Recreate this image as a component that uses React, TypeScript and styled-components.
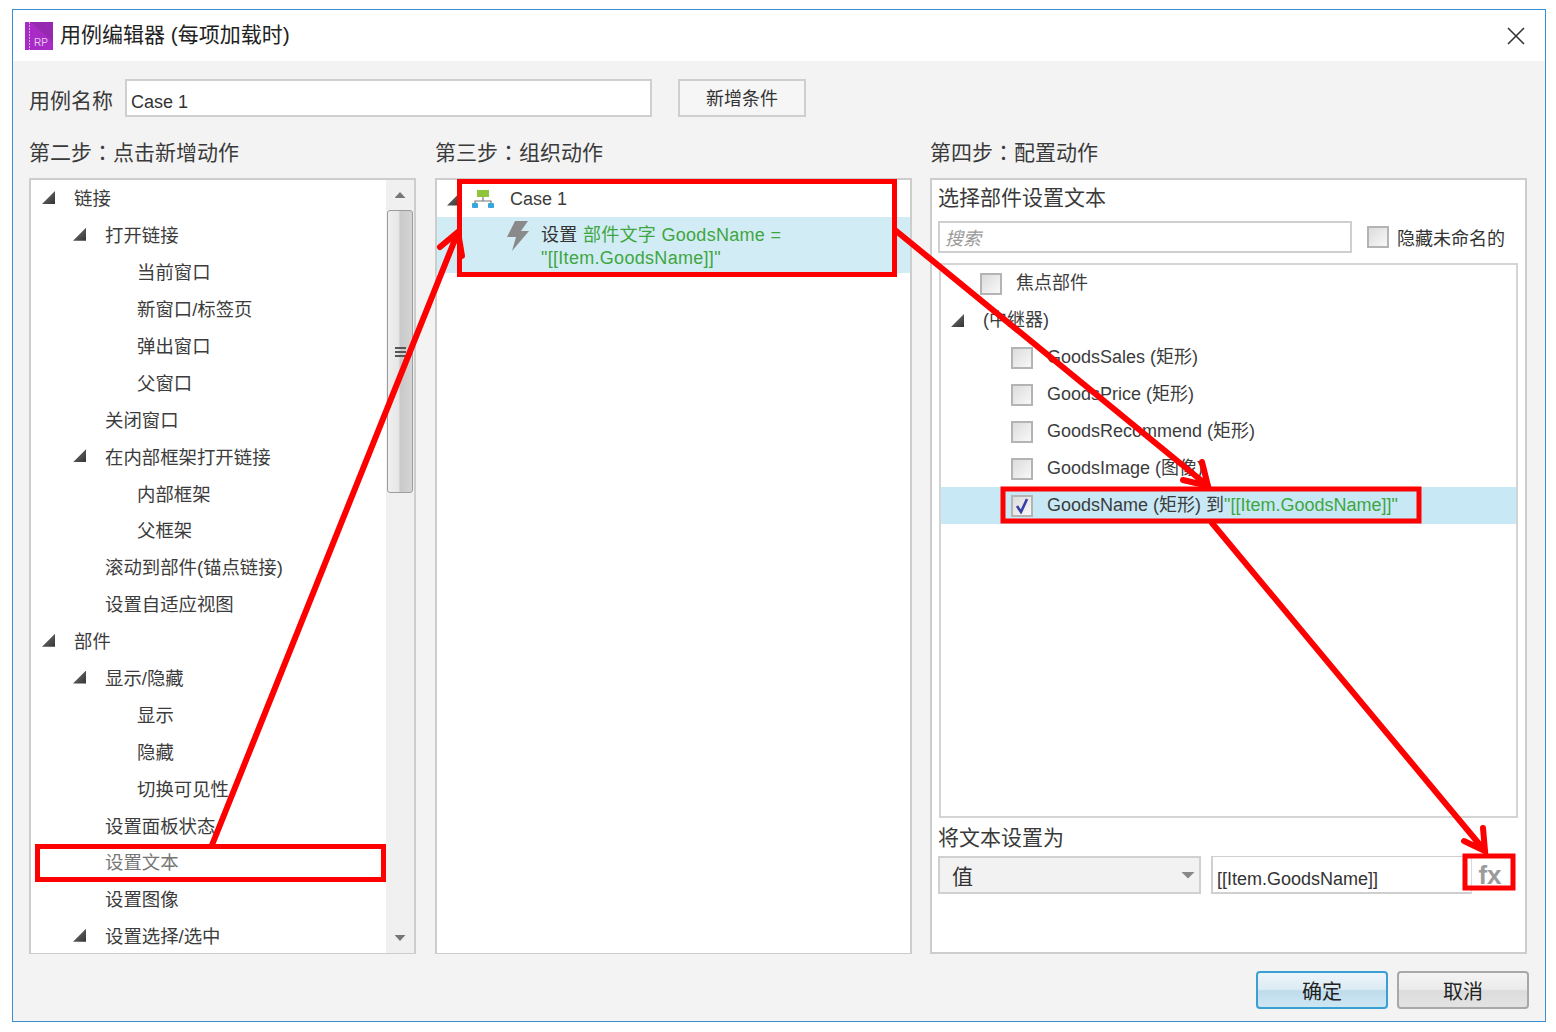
import React from "react";
import styled, { createGlobalStyle } from "styled-components";

const Global = createGlobalStyle`
  html, body { margin: 0; padding: 0; background: #fff; }
  * { box-sizing: border-box; }
  body { font-family: "Liberation Sans", "Noto Sans CJK SC", sans-serif; color: #3c3c3c; }
`;

const Page = styled.div`
  position: relative;
  width: 1556px;
  height: 1032px;
  overflow: hidden;
  padding: 9px 0 0 12px;
`;
const Dialog = styled.div`
  width: 1534px;
  height: 1013px;
  border: 1px solid #3a8fd3;
  background: #f3f3f3;
  display: flex;
  flex-direction: column;
`;
const TitleBar = styled.div`
  height: 51px;
  background: #fff;
  display: flex;
  align-items: center;
  padding: 0 19px 0 12px;
  gap: 7px;
  font-size: 21px;
  color: #222;
`;
const TitleText = styled.div`
  flex: 1;
  margin-top: -5px;
`;
const Content = styled.div`
  flex: 1;
  padding: 18px 17px 0 16px;
  display: flex;
  flex-direction: column;
`;
const NameRow = styled.div`
  display: flex;
  align-items: center;
  height: 38px;
`;
const Label = styled.div`
  font-size: 21px;
  line-height: 28px;
  height: 28px;
  color: #3a3a3a;
`;
const Colon = styled.span`
  font-family: "Noto Sans CJK TC", sans-serif;
  line-height: 1;
`;
const NameLabel = styled(Label)`
  width: 96px;
  margin-top: 6px;
`;
const Field = styled.div<{ $w: number; $h: number }>`
  width: ${(p) => p.$w}px;
  height: ${(p) => p.$h}px;
  background: #fff;
  border: 2px solid #cfcfcf;
  font-size: 18px;
  color: #333;
  display: flex;
  align-items: center;
  padding-left: 4px;
`;
const NameField = styled(Field)`
  padding-top: 8px;
`;
const AddButton = styled.div`
  width: 128px;
  height: 38px;
  margin-left: 26px;
  border: 2px solid #cfcfcf;
  background: #f6f6f6;
  font-size: 18px;
  color: #333;
  display: flex;
  align-items: center;
  justify-content: center;
  padding-bottom: 2px;
`;
const Columns = styled.div`
  display: grid;
  grid-template-columns: 388px 477px 597px;
  column-gap: 18px;
  margin-top: 22px;
`;
const Column = styled.div`
  display: flex;
  flex-direction: column;
  gap: 11px;
`;
const LeftColumn = styled(Column)`
  padding-right: 1px;
`;
const Panel = styled.div`
  height: 776px;
  background: #fff;
  border: 2px solid #cdcdcd;
  border-bottom-width: 1px;
  overflow: hidden;
  display: flex;
`;
const TreeList = styled.div`
  flex: 1;
  min-width: 0;
`;
const LeftList = styled(TreeList)`
  margin-top: -1px;
`;
const levelPad = [11, 42, 74];
const Row = styled.div<{ $level: number; $dim?: boolean }>`
  height: 36.9px;
  display: flex;
  align-items: center;
  font-size: 18.4px;
  color: ${(p) => (p.$dim ? "#777" : "#3c3c3c")};
  padding-left: ${(p) => levelPad[p.$level]}px;
  white-space: nowrap;
`;
const Tri = styled.span`
  width: 13px;
  height: 13px;
  flex: none;
  margin-right: 19px;
  background: linear-gradient(135deg, #777, #333);
  clip-path: polygon(100% 0, 100% 100%, 0 100%);
`;
const Spacer = styled.span`
  width: 32px;
  flex: none;
`;
const ScrollBar = styled.div`
  width: 28px;
  flex: none;
  background: #f0f0f0;
  display: flex;
  flex-direction: column;
  align-items: center;
  position: relative;
`;
const ArrowBtn = styled.div<{ $up?: boolean }>`
  height: 30px;
  flex: none;
  display: flex;
  align-items: center;
  justify-content: center;
  &::after {
    content: "";
    width: 11px;
    height: 6px;
    background: #777;
    clip-path: ${(p) =>
      p.$up ? "polygon(50% 0, 100% 100%, 0 100%)" : "polygon(0 0, 100% 0, 50% 100%)"};
  }
`;
const Thumb = styled.div`
  width: 26px;
  height: 283px;
  border: 1px solid #9c9c9c;
  border-radius: 3px;
  background: linear-gradient(90deg, #efefef 0, #e6e6e6 45%, #c9c9c9 50%, #d4d4d4 100%);
  display: flex;
  flex-direction: column;
  align-items: center;
  justify-content: center;
  gap: 2px;
`;
const Grip = styled.div`
  width: 11px;
  height: 2px;
  background: #555;
`;
const TrackFill = styled.div`
  flex: 1;
`;

const MidRow = styled.div`
  height: 37px;
  display: flex;
  align-items: center;
  padding: 1px 0 0 10px;
  font-size: 18px;
  color: #3c3c3c;
`;
const CaseIcon = styled.svg`
  margin-left: -7px;
  margin-right: 16px;
`;
const MidSelected = styled.div`
  height: 56px;
  background: #d2ecf6;
  display: flex;
  padding-left: 70px;
  padding-top: 7px;
  gap: 12px;
`;
const Bolt = styled.svg`
  margin-top: -3px;
  flex: none;
`;
const ActionText = styled.div`
  font-size: 18px;
  line-height: 23px;
  color: #333;
  letter-spacing: 0.3px;
`;
const Green = styled.span`
  color: #3fa63f;
`;
const RightPanel = styled(Panel)`
  flex-direction: column;
  padding: 0 6px;
  border-bottom-width: 2px;
`;
const RightHead = styled(Label)`
  margin-top: 4px;
`;
const SearchRow = styled.div`
  display: flex;
  align-items: center;
  margin-top: 9px;
  height: 32px;
`;
const SearchField = styled(Field)`
  color: #9a9a9a;
  font-style: italic;
  padding-left: 5px;
`;
const Hide = styled.div`
  margin-left: 15px;
  display: flex;
  align-items: center;
  gap: 8px;
  font-size: 18px;
  color: #333;
`;
const Box = styled.span`
  width: 22px;
  height: 22px;
  flex: none;
  border: 2px solid #b4b4b4;
  background: linear-gradient(135deg, #dcdcdc, #f8f8f8);
  display: flex;
  align-items: center;
  justify-content: center;
`;
const WidgetTree = styled.div`
  width: 579px;
  height: 555px;
  margin-top: 10px;
  margin-left: 1px;
  border: 2px solid #d4d4d4;
  display: flex;
  flex-direction: column;
`;
const WRow = styled.div<{ $indent: number; $selected?: boolean }>`
  height: 37px;
  flex: none;
  display: flex;
  align-items: center;
  gap: 14px;
  padding-left: ${(p) => p.$indent}px;
  font-size: 18px;
  color: #3c3c3c;
  background: ${(p) => (p.$selected ? "#c9e8f6" : "transparent")};
  white-space: nowrap;
`;
const WText = styled.span`
  margin-bottom: 5px;
`;
const GroupText = styled(WText)`
  margin-left: 5px;
`;
const WTri = styled(Tri)`
  margin-right: 0;
`;
const SetLabel = styled(Label)`
  margin-top: 6px;
`;
const SetRow = styled.div`
  display: flex;
  margin-top: 4px;
  height: 38px;
`;
const Select = styled.div`
  width: 263px;
  height: 38px;
  border: 2px solid #d0d0d0;
  background: #f2f2f2;
  display: flex;
  align-items: center;
  justify-content: space-between;
  padding: 0 4px 0 12px;
  font-size: 21px;
  color: #333;
  &::after {
    content: "";
    width: 14px;
    height: 7px;
    background: #888;
    clip-path: polygon(0 0, 100% 0, 50% 100%);
  }
`;
const ValueField = styled(Field)`
  margin-left: 10px;
  padding-top: 10px;
  border-top-width: 1px;
  border-right: 0;
`;
const Fx = styled.div`
  width: 40px;
  height: 38px;
  border-left: 1px solid #d8d8d8;
  display: flex;
  align-items: center;
  justify-content: center;
  padding-right: 3px;
  font-size: 26px;
  font-weight: 700;
  color: #9b9b9b;
`;
const Footer = styled.div`
  display: flex;
  justify-content: flex-end;
  gap: 9px;
  margin-top: 17px;
  margin-right: -1px;
`;
const DlgButton = styled.div<{ $primary?: boolean }>`
  width: 132px;
  height: 38px;
  border-radius: 4px;
  border: 2px solid ${(p) => (p.$primary ? "#3aa0d4" : "#a8a8a8")};
  background: ${(p) =>
    p.$primary
      ? "linear-gradient(#edf5fa 0, #dcebf3 48%, #bfdcec 52%, #cde6f3 100%)"
      : "linear-gradient(#f3f3f3 0, #ebebeb 48%, #dcdcdc 52%, #e3e3e3 100%)"};
  display: flex;
  align-items: center;
  justify-content: center;
  font-size: 20px;
  color: #222;
`;
const Overlay = styled.svg`
  position: absolute;
  left: 0;
  top: 0;
  pointer-events: none;
`;

const Check = () => (
  <svg width="15" height="17" viewBox="0 0 15 17">
    <path d="M2 9 L6 15 L12 2" fill="none" stroke="#3a3fa8" strokeWidth="2.6" />
  </svg>
);

const Logo = () => (
  <svg width="28" height="28" viewBox="0 0 28 28">
    <rect width="28" height="28" fill="#a72bc4" />
    <path d="M6 0 L28 0 L28 20 Z" fill="#8d2aa8" opacity="0.7" />
    <path d="M4.5 0 V28" stroke="#d9a5e6" strokeWidth="1" strokeDasharray="2 1" />
    <text x="9" y="24" fontSize="10" fill="#e6c6ee" fontFamily="Liberation Sans">RP</text>
  </svg>
);

const CloseIcon = () => (
  <svg width="20" height="20" viewBox="0 0 20 20">
    <path d="M2 2 L18 18 M18 2 L2 18" stroke="#333" strokeWidth="1.6" />
  </svg>
);

type Item = { t: string; l: number; tri?: boolean; dim?: boolean };
const items: Item[] = [
  { t: "链接", l: 0, tri: true },
  { t: "打开链接", l: 1, tri: true },
  { t: "当前窗口", l: 2 },
  { t: "新窗口/标签页", l: 2 },
  { t: "弹出窗口", l: 2 },
  { t: "父窗口", l: 2 },
  { t: "关闭窗口", l: 1 },
  { t: "在内部框架打开链接", l: 1, tri: true },
  { t: "内部框架", l: 2 },
  { t: "父框架", l: 2 },
  { t: "滚动到部件(锚点链接)", l: 1 },
  { t: "设置自适应视图", l: 1 },
  { t: "部件", l: 0, tri: true },
  { t: "显示/隐藏", l: 1, tri: true },
  { t: "显示", l: 2 },
  { t: "隐藏", l: 2 },
  { t: "切换可见性", l: 2 },
  { t: "设置面板状态", l: 1 },
  { t: "设置文本", l: 1, dim: true },
  { t: "设置图像", l: 1 },
  { t: "设置选择/选中", l: 1, tri: true },
];

const widgets = ["GoodsSales (矩形)", "GoodsPrice (矩形)", "GoodsRecommend (矩形)", "GoodsImage (图像)"];

const Arrow = ({ d }: { d: string }) => (
  <path d={d} fill="none" stroke="#f00" strokeWidth="6" strokeLinecap="round" strokeLinejoin="miter" />
);

export default function App() {
  return (
    <Page>
      <Global />
      <Dialog>
        <TitleBar>
          <Logo />
          <TitleText>用例编辑器 (每项加载时)</TitleText>
          <CloseIcon />
        </TitleBar>
        <Content>
          <NameRow>
            <NameLabel>用例名称</NameLabel>
            <NameField $w={527} $h={38}>Case 1</NameField>
            <AddButton>新增条件</AddButton>
          </NameRow>
          <Columns>
            <LeftColumn>
              <Label>第二步<Colon>：</Colon>点击新增动作</Label>
              <Panel>
                <LeftList>
                  {items.map((it) => (
                    <Row key={it.t} $level={it.l} $dim={it.dim}>
                      {it.tri ? <Tri /> : <Spacer />}
                      {it.t}
                    </Row>
                  ))}
                </LeftList>
                <ScrollBar>
                  <ArrowBtn $up />
                  <Thumb>
                    <Grip />
                    <Grip />
                    <Grip />
                  </Thumb>
                  <TrackFill />
                  <ArrowBtn />
                </ScrollBar>
              </Panel>
            </LeftColumn>
            <Column>
              <Label>第三步<Colon>：</Colon>组织动作</Label>
              <Panel>
                <TreeList>
                  <MidRow>
                    <Tri />
                    <CaseIcon width="22" height="20" viewBox="0 0 22 20">
                      <rect x="5" y="1" width="12" height="7" fill="#8fc53a" />
                      <path d="M11 8 V12 M3 16 V12 H19 V16" fill="none" stroke="#777" strokeWidth="1.2" />
                      <rect x="0" y="14" width="6" height="5" rx="1" fill="#35a7e0" />
                      <rect x="16" y="14" width="6" height="5" rx="1" fill="#35a7e0" />
                    </CaseIcon>
                    Case 1
                  </MidRow>
                  <MidSelected>
                    <Bolt width="22" height="30" viewBox="0 0 22 30">
                      <path d="M8 0 H21 L14 10 H22 L5 30 L9 16 H0 Z" fill="#8a8a8a" />
                    </Bolt>
                    <ActionText>
                      设置 <Green>部件文字 GoodsName =<br />"[[Item.GoodsName]]"</Green>
                    </ActionText>
                  </MidSelected>
                </TreeList>
              </Panel>
            </Column>
            <Column>
              <Label>第四步<Colon>：</Colon>配置动作</Label>
              <RightPanel>
                <RightHead>选择部件设置文本</RightHead>
                <SearchRow>
                  <SearchField $w={414} $h={32}>搜索</SearchField>
                  <Hide>
                    <Box />
                    隐藏未命名的
                  </Hide>
                </SearchRow>
                <WidgetTree>
                  <WRow $indent={39}>
                    <Box />
                    <WText>焦点部件</WText>
                  </WRow>
                  <WRow $indent={10}>
                    <WTri />
                    <GroupText>(中继器)</GroupText>
                  </WRow>
                  {widgets.map((w) => (
                    <WRow key={w} $indent={70}>
                      <Box />
                      <WText>{w}</WText>
                    </WRow>
                  ))}
                  <WRow $indent={70} $selected>
                    <Box>
                      <Check />
                    </Box>
                    <WText>
                      GoodsName (矩形) 到<Green>"[[Item.GoodsName]]"</Green>
                    </WText>
                  </WRow>
                </WidgetTree>
                <SetLabel>将文本设置为</SetLabel>
                <SetRow>
                  <Select>值</Select>
                  <ValueField $w={260} $h={38}>[[Item.GoodsName]]</ValueField>
                  <Fx>fx</Fx>
                </SetRow>
              </RightPanel>
            </Column>
          </Columns>
          <Footer>
            <DlgButton $primary>确定</DlgButton>
            <DlgButton>取消</DlgButton>
          </Footer>
        </Content>
      </Dialog>
      <Overlay width="1556" height="1032" viewBox="0 0 1556 1032">
        <g fill="none" stroke="#f00" strokeWidth="5">
          <rect x="37.5" y="846.5" width="346" height="33" />
          <rect x="459.5" y="181.5" width="435" height="93" />
          <rect x="1003" y="489" width="416" height="32" />
          <rect x="1465" y="856" width="48" height="32" />
        </g>
        <Arrow d="M212 845 L458 232 M440 247 L458 232 L462 256" />
        <Arrow d="M895 230 L1208 486 M1183 480 L1208 486 L1202 462" />
        <Arrow d="M1212 523 L1485 851 M1464 841 L1485 851 L1483 828" />
      </Overlay>
    </Page>
  );
}
